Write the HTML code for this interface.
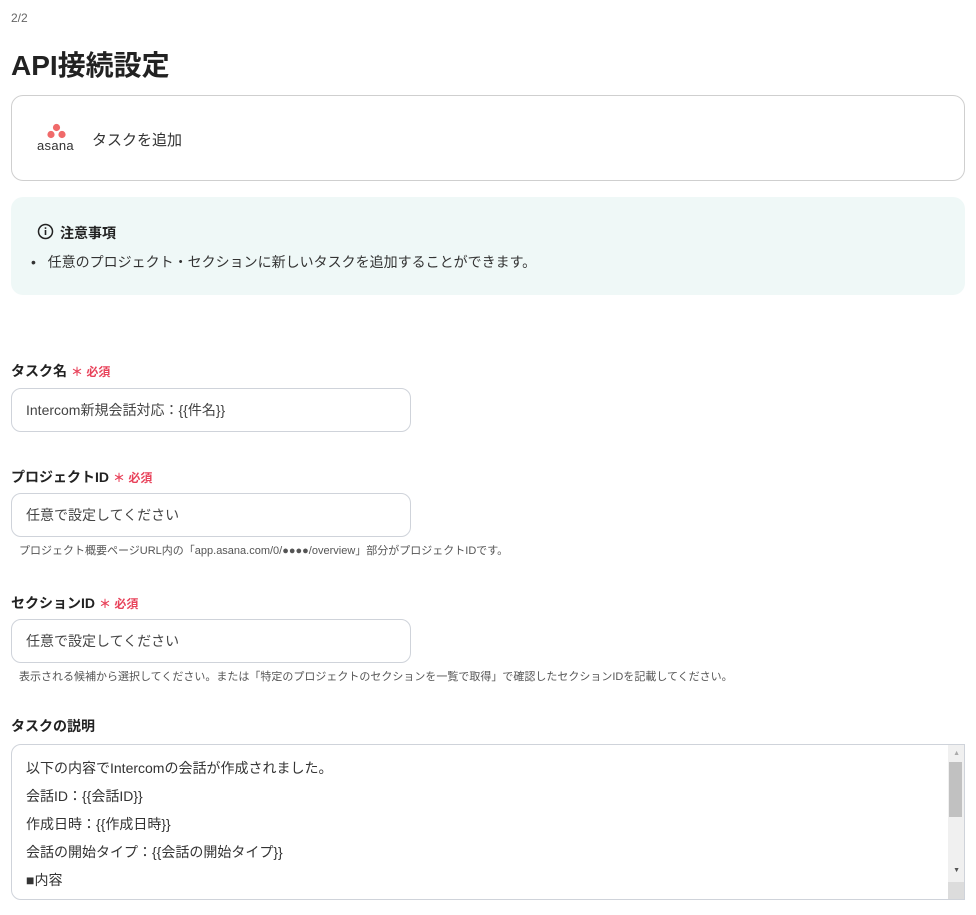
<!DOCTYPE html>
<html><head><meta charset="utf-8"><style>
*{box-sizing:border-box;margin:0;padding:0}
body{width:976px;height:915px;background:#fff;font-family:"Liberation Sans","Noto Sans CJK JP",sans-serif;color:#333;position:relative;overflow:hidden}
.a{position:absolute}
.lbl{font-size:14px;font-weight:bold;color:#222}
.req{color:#e8425a;font-size:12px;font-weight:bold;margin-left:4px}
.inp{position:absolute;left:11px;width:400px;height:44px;border:1px solid #cfd3da;border-radius:10px;font-size:14px;color:#444;padding:12px 14px;line-height:18px}
.hint{font-size:11px;color:#555}
</style></head><body>
<div class="a" style="left:11px;top:11px;font-size:12px;color:#666">2/2</div>
<div class="a" style="left:11px;top:44px;font-size:28px;font-weight:bold;color:#222">API接続設定</div>
<div class="a" style="left:11px;top:95px;width:954px;height:86px;border:1px solid #cfcfcf;border-radius:12px"></div>
<svg class="a" style="left:44px;top:123px" width="26" height="16"><circle cx="12.5" cy="4.5" r="3.6" fill="#f06a6a"/><circle cx="7" cy="11.5" r="3.6" fill="#f06a6a"/><circle cx="18" cy="11.5" r="3.6" fill="#f06a6a"/></svg>
<div class="a" style="left:37px;top:138px;font-size:13px;color:#333;letter-spacing:0.3px">asana</div>
<div class="a" style="left:92px;top:129px;font-size:15px;color:#333">タスクを追加</div>
<div class="a" style="left:11px;top:197px;width:954px;height:98px;background:#eff8f7;border-radius:12px"></div>
<svg class="a" style="left:37px;top:223px" width="17" height="17"><circle cx="8.5" cy="8.5" r="7" fill="none" stroke="#222" stroke-width="1.5"/><rect x="7.7" y="7" width="1.6" height="5" fill="#222"/><rect x="7.7" y="4.3" width="1.6" height="1.6" fill="#222"/></svg>
<div class="a lbl" style="left:60px;top:223px;font-size:14px">注意事項</div>
<div class="a" style="left:31px;top:252px;font-size:14px;color:#333">•&nbsp;&nbsp;&nbsp;任意のプロジェクト・セクションに新しいタスクを追加することができます。</div>

<div class="a lbl" style="left:11px;top:361px">タスク名<span class="req">＊ 必須</span></div>
<div class="inp" style="top:388px">Intercom新規会話対応：{{件名}}</div>

<div class="a lbl" style="left:11px;top:467px">プロジェクトID<span class="req">＊ 必須</span></div>
<div class="inp" style="top:493px">任意で設定してください</div>
<div class="a hint" style="left:19px;top:542px">プロジェクト概要ページURL内の「app.asana.com/0/●●●●/overview」部分がプロジェクトIDです。</div>

<div class="a lbl" style="left:11px;top:593px">セクションID<span class="req">＊ 必須</span></div>
<div class="inp" style="top:619px">任意で設定してください</div>
<div class="a hint" style="left:19px;top:668px">表示される候補から選択してください。または「特定のプロジェクトのセクションを一覧で取得」で確認したセクションIDを記載してください。</div>

<div class="a lbl" style="left:11px;top:716px">タスクの説明</div>
<div class="a" style="left:11px;top:744px;width:954px;height:156px;border:1px solid #cfd3da;border-radius:10px 0 0 10px;overflow:hidden">
<div style="padding:12px 14px;font-size:14px;color:#333;line-height:28px;margin-top:-3px">以下の内容でIntercomの会話が作成されました。<br>会話ID：{{会話ID}}<br>作成日時：{{作成日時}}<br>会話の開始タイプ：{{会話の開始タイプ}}<br>■内容</div>
<div class="a" style="right:0;top:0;width:16px;height:156px;background:#f0f0f0"></div>
<div class="a" style="right:2px;top:17px;width:13px;height:55px;background:#c1c1c1"></div>
<div class="a" style="right:4px;top:5px;font-size:7px;color:#aaa">▲</div>
<div class="a" style="right:4px;top:122px;font-size:7px;color:#555">▼</div>
<div class="a" style="right:0;bottom:0;width:16px;height:17px;background:#dcdcdc"></div>
</div>
</body></html>
